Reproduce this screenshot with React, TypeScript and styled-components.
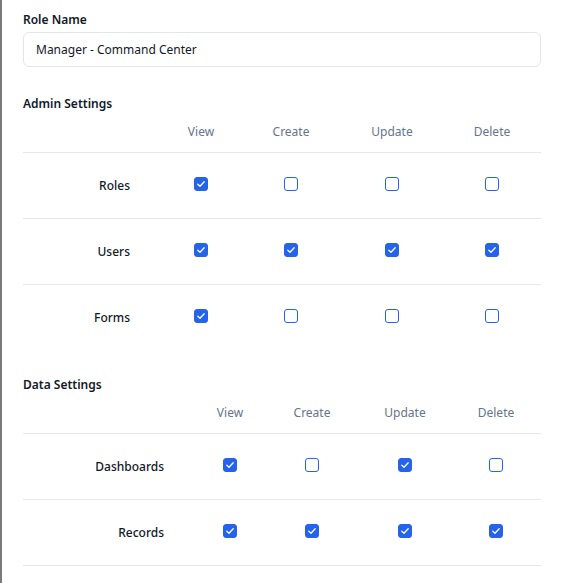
import React from 'react'
import styled, { createGlobalStyle } from 'styled-components'

const GlobalStyle = createGlobalStyle`
  html, body {
    margin: 0;
    padding: 0;
    background: #ffffff;
  }
  body {
    font-family: "Noto Sans", "Open Sans", sans-serif;
    font-size: 12px;
    color: #111827;
  }
`

const Page = styled.div`
  height: 583px;
  overflow: hidden;
  box-sizing: border-box;
  border-left: 2px solid #7b7b7b;
  padding: 12px 40px 0 21px;
`

const Field = styled.div`
  display: flex;
  flex-direction: column;
  gap: 4px;
  margin-bottom: 28px;
`

const Label = styled.label`
  font-weight: 600;
  line-height: 16px;
`

const Input = styled.input`
  height: 35px;
  box-sizing: border-box;
  border: 1px solid #e2e5ec;
  border-radius: 6px;
  padding: 0 12px 1px;
  font: inherit;
  color: #111827;
  outline: none;
`

const Section = styled.section<{ $closed?: boolean }>`
  margin-bottom: 26px;
  border-bottom: ${({ $closed }) => ($closed ? '1px solid #e5e7eb' : 'none')};
`

const SectionTitle = styled.h3`
  margin: 0;
  font-size: 12px;
  font-weight: 600;
  line-height: 18px;
`

const Row = styled.div<{ $cols: string; $head?: boolean }>`
  display: grid;
  grid-template-columns: ${({ $cols }) => $cols};
  align-items: center;
  height: ${({ $head }) => ($head ? '39px' : '66px')};
  border-top: ${({ $head }) => ($head ? 'none' : '1px solid #e5e7eb')};
  box-sizing: border-box;
`

const HeadCell = styled.div`
  text-align: center;
  color: #64748b;
  margin-top: -2px;
`

const RowLabel = styled.div`
  text-align: right;
  padding-right: 31px;
  font-weight: 500;
  margin-top: -1px;
`

const Cell = styled.div`
  display: flex;
  justify-content: center;
  margin-top: -4px;
`

const Box = styled.span<{ $checked: boolean }>`
  width: 14px;
  height: 14px;
  box-sizing: border-box;
  border-radius: 3px;
  border: 1.5px solid #2563eb;
  background: ${({ $checked }) => ($checked ? '#2563eb' : '#ffffff')};
  display: flex;
  align-items: center;
  justify-content: center;
`

const Check = ({ checked }: { checked: boolean }) => (
  <Box $checked={checked}>
    {checked && (
      <svg width="10" height="10" viewBox="0 0 10 10">
        <path d="M1.8 5.2 L4 7.2 L8.2 2.8" fill="none" stroke="#fff" strokeWidth="1.3" strokeLinecap="round" strokeLinejoin="round" />
      </svg>
    )}
  </Box>
)

const actions = ['View', 'Create', 'Update', 'Delete']

type Perm = { name: string; values: boolean[] }

const Table = ({ title, cols, rows, closed }: { title: string; cols: string; rows: Perm[]; closed?: boolean }) => (
  <Section $closed={closed}>
    <SectionTitle>{title}</SectionTitle>
    <Row $cols={cols} $head>
      <div />
      {actions.map((a) => (
        <HeadCell key={a}>{a}</HeadCell>
      ))}
    </Row>
    {rows.map((r) => (
      <Row key={r.name} $cols={cols}>
        <RowLabel>{r.name}</RowLabel>
        {r.values.map((v, i) => (
          <Cell key={i}>
            <Check checked={v} />
          </Cell>
        ))}
      </Row>
    ))}
  </Section>
)

const admin: Perm[] = [
  { name: 'Roles', values: [true, false, false, false] },
  { name: 'Users', values: [true, true, true, true] },
  { name: 'Forms', values: [true, false, false, false] },
]

const data: Perm[] = [
  { name: 'Dashboards', values: [true, false, true, false] },
  { name: 'Records', values: [true, true, true, true] },
]

const App = () => (
  <>
    <GlobalStyle />
    <Page>
      <Field>
        <Label>Role Name</Label>
        <Input defaultValue="Manager - Command Center" />
      </Field>
      <Table title="Admin Settings" cols="138px 80px 100px 102px 98px" rows={admin} />
      <Table title="Data Settings" cols="172px 70px 94px 92px 90px" rows={data} closed />
    </Page>
  </>
)

export default App
